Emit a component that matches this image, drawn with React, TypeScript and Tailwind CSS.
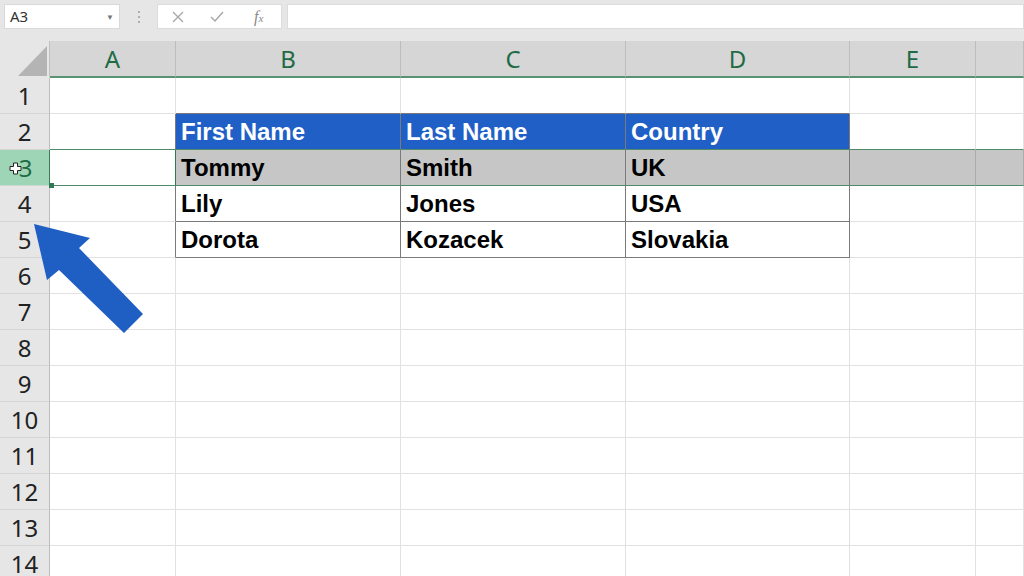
import { ReactNode } from 'react'

const cols = ['A', 'B', 'C', 'D', 'E', '']
const rows = Array.from({ length: 14 }, (_, i) => i + 1)

const data: Record<number, string[]> = {
  2: ['First Name', 'Last Name', 'Country'],
  3: ['Tommy', 'Smith', 'UK'],
  4: ['Lily', 'Jones', 'USA'],
  5: ['Dorota', 'Kozacek', 'Slovakia'],
}

const Toolbar = () => (
  <div className="h-[41px] bg-[#e6e6e6] flex items-start pt-[4px] pl-[4px] gap-0">
    <div className="w-[116px] h-[25px] bg-white border border-[#d9d9d9] flex items-center justify-between px-[5px]">
      <span className="text-[15px] text-[#333] font-['Noto_Sans',sans-serif]">A3</span>
      <span className="text-[8px] text-[#777]">▼</span>
    </div>
    <div className="w-[37px] h-[25px] flex flex-col items-center justify-center gap-[3px]">
      <span className="w-[2px] h-[2px] bg-[#b0b0b0]" />
      <span className="w-[2px] h-[2px] bg-[#b0b0b0]" />
      <span className="w-[2px] h-[2px] bg-[#b0b0b0]" />
    </div>
    <div className="w-[125px] h-[25px] bg-white border border-[#dcdcdc] flex items-center text-[#a6a6a6]">
      <svg width="14" height="14" viewBox="0 0 14 14" className="ml-[13px]">
        <path d="M2 2 L12 12 M12 2 L2 12" stroke="#a6a6a6" strokeWidth="1.3" />
      </svg>
      <svg width="16" height="14" viewBox="0 0 16 14" className="ml-[24px]">
        <path d="M2 7 L6 11 L14 2" stroke="#a6a6a6" strokeWidth="1.4" fill="none" />
      </svg>
      <span className="ml-[29px] italic text-[16px] font-['Liberation_Serif',serif] text-[#8a8a8a]">
        f<span className="text-[11px]">x</span>
      </span>
    </div>
    <div className="flex-1 h-[25px] bg-white border border-[#dcdcdc] ml-[5px]" />
  </div>
)

const Corner = () => (
  <div className="h-[37px] bg-[#e6e6e6] border-r border-[#bfbfbf] border-b-2 border-b-[#e6e6e6] relative">
    <svg width="50" height="37" className="absolute inset-0">
      <polygon points="18,35 47,35 47,5" fill="#b4b4b4" />
    </svg>
  </div>
)

const ColHeader = ({ label }: { label: string }) => (
  <div className="h-[37px] bg-[#d6d6d6] border-r border-[#bdbdbd] border-b-2 border-b-[#5a9274] flex items-center justify-center text-[24px] text-[#1e6b44] font-['Noto_Sans',sans-serif]">
    {label}
  </div>
)

const RowHeader = ({ n }: { n: number }) => {
  const active = n === 3
  return (
    <div
      className={
        'h-[36px] border-r border-b flex items-center justify-center text-[24px] font-["Noto_Sans",sans-serif] relative ' +
        (active
          ? 'bg-[#9fd5b7] text-[#1e6b44] border-r-[#3f7d5a] border-b-[#c9d9cf]'
          : 'bg-[#e6e6e6] text-[#222] border-r-[#bdbdbd] border-b-[#d4d4d4]')
      }
    >
      {active && (
        <svg width="13" height="13" viewBox="0 0 13 13" className="absolute left-[9px] top-[12px]">
          <path d="M4.5 1 H8.5 V4.5 H12 V8.5 H8.5 V12 H4.5 V8.5 H1 V4.5 H4.5 Z" fill="#fff" stroke="#222" strokeWidth="1" />
        </svg>
      )}
      <span className={active ? 'ml-[2px]' : ''}>{n}</span>
    </div>
  )
}

const Cell = ({ row, col }: { row: number; col: number }) => {
  // col 0 = A ... 5 = F
  const inTable = col >= 1 && col <= 3 && row >= 2 && row <= 5
  const text = inTable ? data[row][col - 1] : ''
  let bg = 'bg-white'
  let rb = 'border-r-[#e1e1e1]'
  let bb = 'border-b-[#e1e1e1]'
  let fg = 'text-black'

  if (row === 3 && col >= 1) bg = 'bg-[#c6c6c6]'
  if (row === 3 && col >= 4) rb = 'border-r-[#ababab]'
  if (inTable) {
    rb = 'border-r-[#7a7a7a]'
    bb = 'border-b-[#7a7a7a]'
  }
  if (col === 0 && row >= 2 && row <= 5) rb = 'border-r-[#7a7a7a]'
  if (row === 1 && col >= 1 && col <= 3) bb = 'border-b-[#7a7a7a]'
  if (row === 2) {
    bb = 'border-b-[#4f8a69]'
    if (inTable) {
      bg = 'bg-[#1f5fc6]'
      fg = 'text-white'
    }
  }
  if (row === 3) bb = 'border-b-[#4f8a69]'
  if (row === 3 && col === 0) rb = 'border-r-[#2f7a50]'

  const content: ReactNode = text
  return (
    <div
      className={`h-[36px] border-r border-b ${rb} ${bb} ${bg} ${fg} relative flex items-center pl-[5px] text-[24px] font-bold font-['Liberation_Sans',Arial,sans-serif] whitespace-nowrap`}
    >
      {content}
      {row === 3 && col === 0 && (
        <span className="absolute left-[-1px] bottom-[-3px] w-[5px] h-[5px] bg-[#2f7a50] z-10" />
      )}
    </div>
  )
}

const Arrow = () => (
  <svg width="160" height="120" viewBox="0 220 160 120" className="absolute left-0 top-[220px] pointer-events-none">
    <polygon points="34,224 90,238 79,248 143,314 124,333 59,270 47,280" fill="#1f5fc4" />
  </svg>
)

export default function App() {
  return (
    <div className="w-[1024px] h-[576px] overflow-hidden bg-white relative">
      <Toolbar />
      <div className="grid grid-cols-[50px_126px_225px_225px_224px_126px_48px]">
        <Corner />
        {cols.map((c, i) => (
          <ColHeader key={'col' + i} label={c} />
        ))}
        {rows.map((r) => (
          <div key={'row' + r} className="contents">
            <RowHeader n={r} />
            {cols.map((_, ci) => (
              <Cell key={r + '-' + ci} row={r} col={ci} />
            ))}
          </div>
        ))}
      </div>
      <Arrow />
    </div>
  )
}
